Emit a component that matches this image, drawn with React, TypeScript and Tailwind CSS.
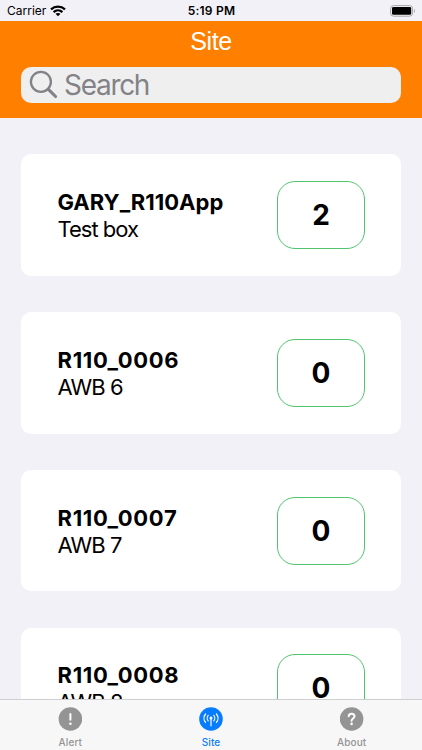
import React, { useState } from 'react';

const SITES = [
  { id: 'GARY_R110App', name: 'Test box', count: 2, nameTracking: 'tracking-[-1px]', idTracking: 'tracking-[0px]' },
  { id: 'R110_0006', name: 'AWB 6', count: 0, nameTracking: 'tracking-[-0.9px]', idTracking: 'tracking-[0.7px]' },
  { id: 'R110_0007', name: 'AWB 7', count: 0, nameTracking: 'tracking-[-0.9px]', idTracking: 'tracking-[0.7px]' },
  { id: 'R110_0008', name: 'AWB 8', count: 0, nameTracking: 'tracking-[-0.9px]', idTracking: 'tracking-[0.7px]' },
];

function WifiIcon() {
  return (
    <svg width="16" height="12" viewBox="0 0 16 12" fill="none" stroke="#000" strokeWidth="2.3">
      <path d="M1 4.3C5 0.6 11 0.6 15 4.3" />
      <path d="M3.6 7.1C6.1 4.8 9.9 4.8 12.4 7.1" />
      <path d="M8 11.3L5.5 8.8C6.9 7.6 9.1 7.6 10.5 8.8Z" fill="#000" stroke="none" />
    </svg>
  );
}

function BatteryIcon() {
  return (
    <svg width="26" height="12" viewBox="0 0 26 12" fill="none">
      <rect x="0.6" y="0.6" width="22" height="10.6" rx="3" stroke="#a5a4a8" />
      <rect x="2" y="2" width="19.2" height="7.8" rx="1.4" fill="#000" />
      <path d="M24 4V8C25.2 7.4 25.2 4.6 24 4Z" fill="#a5a4a8" />
    </svg>
  );
}

function AlertIcon() {
  return (
    <svg width="24" height="24" viewBox="0 0 24 24">
      <circle cx="12.4" cy="12" r="11.8" fill="currentColor" />
      <path d="M12.4 6.9V12.8" stroke="#fff" strokeWidth="2" strokeLinecap="round" />
      <circle cx="12.4" cy="16.8" r="1.3" fill="#fff" />
    </svg>
  );
}

function SiteIcon() {
  return (
    <svg width="24" height="24" viewBox="0 0 24 24" fill="none" stroke="#fff" strokeWidth="1.2" strokeLinecap="round">
      <circle cx="12" cy="12" r="11.8" fill="currentColor" stroke="none" />
      <circle cx="12" cy="10.9" r="1.5" fill="#fff" stroke="none" />
      <path d="M12 11V18.8" />
      <path d="M9.2 8.4C7.9 9.8 7.9 12.4 9.2 13.8M14.8 8.4C16.1 9.8 16.1 12.4 14.8 13.8" />
      <path d="M6.6 7C4.5 9.4 4.5 13 6.6 15.4M17.4 7C19.5 9.4 19.5 13 17.4 15.4" />
    </svg>
  );
}

function AboutIcon() {
  return (
    <svg width="24" height="24" viewBox="0 0 24 24" fill="none">
      <circle cx="11.6" cy="12" r="11.8" fill="currentColor" />
      <path
        d="M8.7 9.2C8.9 7.6 10 6.8 11.6 6.8C13.3 6.8 14.5 7.8 14.5 9.3C14.5 11.5 11.6 11.4 11.6 13.7"
        stroke="#fff"
        strokeWidth="2"
        strokeLinecap="round"
      />
      <circle cx="11.6" cy="16.9" r="1.3" fill="#fff" />
    </svg>
  );
}

const TABS = [
  { label: 'Alert', Icon: AlertIcon },
  { label: 'Site', Icon: SiteIcon },
  { label: 'About', Icon: AboutIcon },
];

export default function App() {
  const [active, setActive] = useState('Site');

  return (
    <div className="flex h-[750px] w-[422px] flex-col overflow-hidden bg-[#f2f1f7] font-['Inter',sans-serif] text-black">
      {/* Status bar */}
      <div className="grid h-[21px] shrink-0 grid-cols-3 items-center pl-[7px] pr-[6px]">
        <div className="flex items-center gap-[4px] text-xs">
          <span>Carrier</span>
          <WifiIcon />
        </div>
        <span className="text-center text-xs font-semibold tracking-[0.2px]">5:19 PM</span>
        <div className="flex justify-end">
          <BatteryIcon />
        </div>
      </div>

      {/* Header */}
      <header className="flex h-[97px] shrink-0 flex-col bg-[#ff8000] px-[21px]">
        <h1 className="h-[45.5px] pt-[5px] text-center font-['Liberation_Sans',sans-serif] text-[25px] leading-[30px] tracking-[-0.4px] text-white">
          Site
        </h1>
        <label className="flex h-[36.5px] items-center gap-[6px] rounded-[10px] bg-[#efeff0] pl-2 text-[#838387]">
          <svg className="shrink-0" width="29" height="29" viewBox="0 0 29 29" fill="none" stroke="currentColor">
            <circle cx="11.9" cy="11.8" r="10" strokeWidth="2.3" />
            <path d="M19.4 19.3L26.6 26.5" strokeWidth="3.1" strokeLinecap="round" />
          </svg>
          <input
            placeholder="Search"
            className="w-full bg-transparent pt-px text-[28px] leading-[36px] tracking-[-1.3px] outline-none placeholder:text-[#838387]"
          />
        </label>
      </header>

      {/* Site list */}
      <main className="flex min-h-0 flex-1 flex-col gap-[36.2px] overflow-hidden px-[21px] pt-[36px]">
        {SITES.map((site) => (
          <div
            key={site.id}
            className="flex h-[121.7px] shrink-0 items-center justify-between rounded-[10px] bg-white pl-[36.5px] pr-9"
          >
            <div className="flex flex-col pt-[2px] text-[22px] leading-[27px]">
              <span className={`font-bold ${site.idTracking}`}>{site.id}</span>
              <span className={site.nameTracking}>{site.name}</span>
            </div>
            <div className="flex h-[68px] w-[88px] items-center justify-center rounded-[18px] border border-[#50c46e] text-[28px] font-bold">
              {site.count}
            </div>
          </div>
        ))}
      </main>

      {/* Tab bar */}
      <nav className="grid h-[51px] shrink-0 grid-cols-3 border-t border-[#cfcfd1] bg-[#f7f7f7]">
        {TABS.map(({ label, Icon }) => (
          <button
            key={label}
            onClick={() => setActive(label)}
            className={`flex flex-col items-center pt-[7px] ${active === label ? 'text-[#087cff]' : 'text-[#949494]'}`}
          >
            <Icon />
            <span className="mt-[4px] text-[10px] font-medium leading-[14px] tracking-[0.1px]">{label}</span>
          </button>
        ))}
      </nav>
    </div>
  );
}
